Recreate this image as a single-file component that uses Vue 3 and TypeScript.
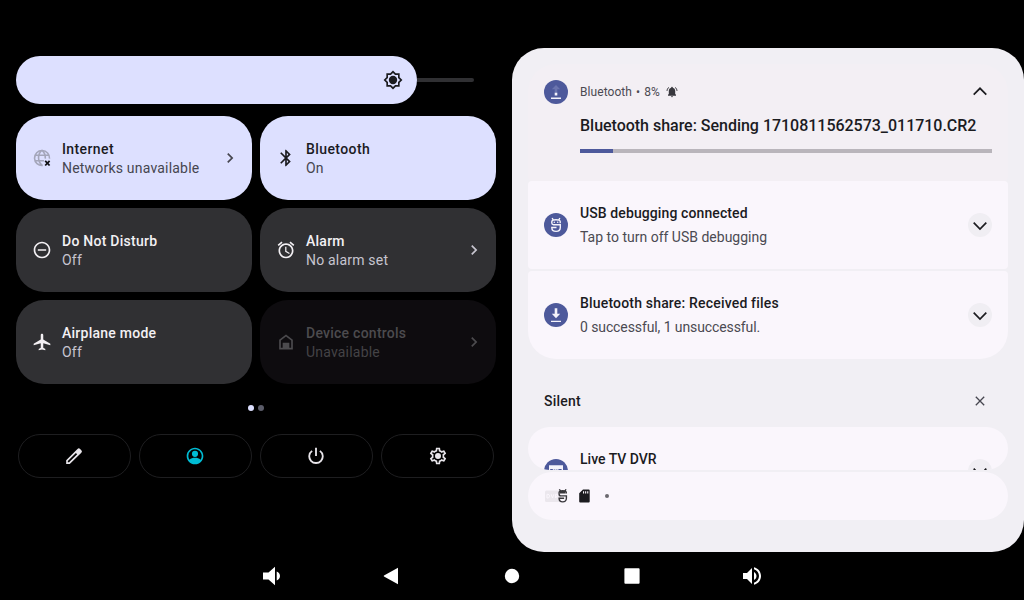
<script setup lang="ts">
interface Tile {
  title: string
  status: string
  icon: string
  state: 'on' | 'off' | 'disabled'
  chevron: boolean
}

interface Notice {
  title: string
  text: string
  icon: string
}

const paths: Record<string, string> = {
  bluetooth:
    'M17.71 7.71L12 2h-1v7.59L6.41 5 5 6.41 10.59 12 5 17.59 6.41 19 11 14.41V22h1l5.71-5.71-4.3-4.29 4.3-4.29zM13 5.83l1.88 1.88L13 9.59V5.83zm1.88 10.46L13 18.17v-3.76l1.88 1.88z',
  dnd: 'M7 11v2h10v-2H7zm5-9C6.48 2 2 6.48 2 12s4.48 10 10 10 10-4.48 10-10S17.52 2 12 2zm0 18c-4.41 0-8-3.59-8-8s3.59-8 8-8 8 3.59 8 8-3.59 8-8 8z',
  alarm:
    'M22 5.72l-4.6-3.86-1.29 1.53 4.6 3.86L22 5.72zM7.88 3.39L6.6 1.86 2 5.71l1.29 1.53 4.59-3.85zM12.5 8H11v6l4.75 2.85.75-1.23-4-2.37V8zM12 4c-4.97 0-9 4.03-9 9s4.02 9 9 9c4.97 0 9-4.03 9-9s-4.03-9-9-9zm0 16c-3.87 0-7-3.13-7-7s3.13-7 7-7 7 3.13 7 7-3.13 7-7 7z',
  airplane:
    'M22 16v-2l-8.5-5V3.5c0-.83-.67-1.5-1.5-1.5s-1.5.67-1.5 1.5V9L2 14v2l8.5-2.5V19L8 20.5V22l4-1 4 1v-1.5L13.5 19v-5.5L22 16z',
  home: 'M12 3L3.8 9.2V21h16.4V9.2L12 3zm6.2 16H16v-6H8v6H5.8v-8.8L12 5.5l6.2 4.7V19z',
  chevron: 'M10 6L8.59 7.41 13.17 12l-4.58 4.59L10 18l6-6z',
  pencil:
    'M20.8 5.100l-1.500-1.500a2.200 2.200 0 0 0-3.100 0L2.600 17.200V21.500h4.300L20.800 8.200a2.200 2.200 0 0 0 0-3.100zM6.100 19.500H4.600V18L14.300 8.400l1.500 1.500z',
  user: 'M12 2C6.480 2 2 6.480 2 12s4.480 10 10 10 10-4.480 10-10S17.520 2 12 2zM4 12a8 8 0 1 1 14.600 4.500C17 14.900 14.500 14.200 12 14.200s-5 .7-6.600 2.300A7.900 7.900 0 0 1 4 12zM12 5.700a3.700 3.700 0 1 0 0 7.400 3.700 3.700 0 0 0 0-7.400z',
  power:
    'M13.100 2h-2.200v10h2.200V2zm4.300 3.100l-1.400 1.500A7 7 0 1 1 8 6.600L6.600 5.100a9.200 9.200 0 1 0 10.800 0z',
  gear: 'M19.430 12.980c.04-.32.07-.64.07-.98 0-.34-.03-.66-.07-.98l2.110-1.650c.19-.15.24-.42.12-.64l-2-3.460c-.09-.16-.26-.25-.44-.25-.06 0-.12.01-.17.03l-2.490 1c-.52-.4-1.080-.73-1.690-.98l-.38-2.650C14.460 2.180 14.250 2 14 2h-4c-.25 0-.46.18-.49.42l-.38 2.650c-.61.25-1.170.59-1.690.98l-2.490-1c-.06-.02-.12-.03-.18-.03-.17 0-.34.09-.43.25l-2 3.460c-.13.22-.07.49.12.64l2.110 1.650c-.04.32-.07.65-.07.98 0 .33.03.66.07.98l-2.110 1.650c-.19.15-.24.42-.12.64l2 3.460c.09.16.26.25.44.25.06 0 .12-.01.17-.03l2.490-1c.52.4 1.080.73 1.690.98l.38 2.650c.03.24.24.42.49.42h4c.25 0 .46-.18.49-.42l.38-2.650c.61-.25 1.170-.59 1.690-.98l2.490 1c.06.02.12.03.18.03.17 0 .34-.09.43-.25l2-3.460c.12-.22.07-.49-.12-.64l-2.110-1.650zm-1.980-1.710c.04.31.05.52.05.73 0 .21-.02.43-.05.73l-.14 1.130.89.7 1.080.84-.7 1.210-1.270-.51-1.040-.42-.9.68c-.43.32-.84.56-1.250.73l-1.060.43-.16 1.130-.2 1.350h-1.400l-.19-1.350-.16-1.130-1.060-.43c-.43-.18-.83-.41-1.230-.71l-.91-.7-1.060.43-1.270.51-.7-1.210 1.080-.84.89-.7-.14-1.130c-.03-.31-.05-.54-.05-.74s.02-.43.05-.73l.14-1.130-.89-.7-1.080-.84.7-1.210 1.270.51 1.040.42.9-.68c.43-.32.84-.56 1.250-.73l1.060-.43.16-1.130.2-1.350h1.390l.19 1.350.16 1.130 1.060.43c.43.18.83.41 1.230.71l.91.7 1.060-.43 1.270-.51.7 1.210-1.070.85-.89.7.14 1.130zM12 8.400a3.600 3.600 0 1 0 0 7.200 3.600 3.600 0 0 0 0-7.200z',
  volDown: 'M3 8.500v7h5.500L15 21.300V2.700L8.500 8.500H3zM16.700 7.600v8.800c2-.6 3.300-2.300 3.300-4.400s-1.300-3.800-3.300-4.400z',
  back: 'M18 3.800v16.400L4 12.600a.8.800 0 0 1 0-1.200z',
  circle: 'M12 4.800a7.200 7.200 0 1 0 0 14.400 7.200 7.200 0 0 0 0-14.400z',
  square: 'M5.300 4.300h13.400a.9.900 0 0 1 .9.900v13.600a.9.900 0 0 1-.9.900H5.300a.9.900 0 0 1-.9-.9V5.200a.9.900 0 0 1 .9-.9z',
  volUp:
    'M3 9v6h4l5 5V4L7 9H3zm13.500 3c0-1.770-1.020-3.290-2.500-4.030v8.050c1.480-.73 2.500-2.250 2.500-4.020zM14 3.230v2.060c2.890.86 5 3.540 5 6.710s-2.110 5.850-5 6.710v2.060c4.010-.91 7-4.490 7-8.770s-2.990-7.860-7-8.770z',
}

const tiles: Tile[] = [
  { title: 'Internet', status: 'Networks unavailable', icon: 'globe', state: 'on', chevron: true },
  { title: 'Bluetooth', status: 'On', icon: 'bluetooth', state: 'on', chevron: false },
  { title: 'Do Not Disturb', status: 'Off', icon: 'dnd', state: 'off', chevron: false },
  { title: 'Alarm', status: 'No alarm set', icon: 'alarm', state: 'off', chevron: true },
  { title: 'Airplane mode', status: 'Off', icon: 'airplane', state: 'off', chevron: false },
  { title: 'Device controls', status: 'Unavailable', icon: 'home', state: 'disabled', chevron: true },
]

const actions = ['pencil', 'user', 'power', 'gear']
const navKeys = ['volDown', 'back', 'circle', 'square', 'volUp']

const notices: Notice[] = [
  { title: 'USB debugging connected', text: 'Tap to turn off USB debugging', icon: 'debug' },
  { title: 'Bluetooth share: Received files', text: '0 successful, 1 unsuccessful.', icon: 'download' },
]

const progress = 8
</script>

<template>
  <div class="screen">
    <main class="shade">
      <section class="quick">
        <div class="brightness">
          <div class="level">
            <svg class="ic20" viewBox="0 0 24 24">
              <path fill-rule="evenodd" d="M20 8.690V4h-4.690L12 .69 8.690 4H4v4.690L.69 12 4 15.310V20h4.690L12 23.310 15.310 20H20v-4.690L23.310 12 20 8.690zm-2 5.790V18h-3.520L12 20.480 9.520 18H6v-3.520L3.520 12 6 9.520V6h3.520L12 3.520 14.480 6H18v3.520L20.480 12 18 14.480z" />
              <circle cx="12" cy="12" r="5" />
            </svg>
          </div>
          <div class="rail"></div>
        </div>

        <div class="tiles">
          <div v-for="t in tiles" :key="t.title" class="tile" :class="t.state">
            <svg v-if="t.icon === 'globe'" class="ic20" viewBox="0 0 20 20">
              <g class="globe">
                <path d="M10.600 17.500A7.500 7.500 0 1 1 17.500 10.600M2.700 7.300h14.600M2.700 12.700h9.300M10.600 17.600C5.300 14 5.300 6 10 2.400C12.600 4.600 13.500 7.300 13.300 10.600" />
              </g>
              <path class="cross" d="M13.200 12.900l4.400 4.600M17.600 12.900l-4.400 4.600" />
            </svg>
            <svg v-else class="ic20" viewBox="0 0 24 24"><path :d="paths[t.icon]" /></svg>
            <div class="label">
              <div class="name">{{ t.title }}</div>
              <div class="status">{{ t.status }}</div>
            </div>
            <svg v-if="t.chevron" class="ic20 more" viewBox="0 0 24 24"><path :d="paths.chevron" /></svg>
          </div>
        </div>

        <div class="dots"><i class="current"></i><i></i></div>

        <div class="actions">
          <div v-for="a in actions" :key="a" class="action" :class="a">
            <svg class="ic20" viewBox="0 0 24 24"><path fill-rule="evenodd" :d="paths[a]" /></svg>
          </div>
        </div>
      </section>

      <section class="panel">
        <article class="sending">
          <span class="badge">
            <svg viewBox="0 0 24 24">
              <path class="faded" d="M12 5l-4.200 4.200h2.900V13h2.600V9.200h2.900z" />
              <path class="glyph" d="M10.700 12.800h2.600v2.600h-2.600zM7 17.600h10v1.500H7z" />
            </svg>
          </span>
          <div class="body">
            <div class="meta">
              <span>Bluetooth</span><span class="sep">•</span><span>{{ progress }}%</span>
              <svg class="bell" viewBox="0 0 12 12">
                <path d="M2 9.700V8.800L2.800 8V4.900C2.800 3.300 3.800 2.200 5.200 1.800V1.500a.8.800 0 0 1 1.600 0V1.800C8.200 2.200 9.200 3.300 9.200 4.900V8L10 8.800V9.700zM5 10.300h2a1 1 0 0 1-2 0z" />
                <path class="ring" d="M1 4.900C1.100 3.400 1.800 2.200 2.900 1.300M11 4.900C10.900 3.400 10.200 2.200 9.100 1.300" />
              </svg>
            </div>
            <h2>Bluetooth share: Sending 1710811562573_011710.CR2</h2>
            <div class="bar"><div :style="{ width: progress + '%' }"></div></div>
          </div>
          <svg class="collapse" viewBox="0 0 24 24"><path d="M5.700 14.700L12 8.300l6.300 6.400" /></svg>
        </article>

        <div class="group">
          <article v-for="n in notices" :key="n.title" class="notice">
            <span class="badge">
              <svg v-if="n.icon === 'debug'" viewBox="0 0 24 24">
                <path class="line" d="M16.200 10.200V8.600C16.200 7.200 14.800 6.800 12 6.800s-4.200.6-4.200 2V10c0 1.100.7 1.700 1.800 1.700h6.700v2.900c0 2.400-1.800 3.800-4.200 3.800s-4.300-1.500-4.300-3.900h4.700M8.200 4.900l.8 1.900M15.800 4.900l-.8 1.900" />
                <circle class="glyph" cx="10.300" cy="9.200" r=".8" /><circle class="glyph" cx="13.700" cy="9.200" r=".8" />
              </svg>
              <svg v-else viewBox="0 0 24 24">
                <path class="glyph" d="M10.700 5.200h2.600v5.600h2.900L12 15.200l-4.200-4.400h2.900zM7 17.700h10v1.400H7z" />
              </svg>
            </span>
            <div class="copy" :class="n.icon">
              <h3>{{ n.title }}</h3>
              <p>{{ n.text }}</p>
            </div>
            <span class="expand"><svg viewBox="0 0 24 24"><path d="M5.700 9.700L12 16l6.300-6.300" /></svg></span>
          </article>
        </div>

        <div class="silent">
          <span>Silent</span>
          <svg viewBox="0 0 24 24"><path d="M7.800 7.800l8.400 8.400M16.200 7.800l-8.400 8.400" /></svg>
        </div>

        <article class="live">
          <span class="badge">
            <svg viewBox="0 0 24 24">
              <path class="glyph" d="M5 6.200h14v11.500H5z" />
              <path class="mark" d="M6.800 13.500V10.500h1.200q1 0 1 1.500t-1 1.500zM10.500 10.500l1.300 3 1.300-3M15 13.500V10.500h2v1.500h-2" />
            </svg>
          </span>
          <h3>Live TV DVR</h3>
          <span class="expand"><svg viewBox="0 0 24 24"><path d="M5.700 9.700L12 16l6.300-6.300" /></svg></span>
        </article>

        <div class="shelf">
          <svg class="stack" viewBox="0 0 23 16">
            <rect class="ghost" x="0" y="2.500" width="16" height="11.500" rx="1.500" />
            <path class="ghost-mark" d="M2 10V6.300h1q1.500 0 1.500 1.800T3 10zM6.200 6.300L7.500 10l1.300-3.700M10.500 10V6.300h2v2h-2l2 1.700" />
            <path class="bug" d="M21.300 5.500V4.500C21.300 3 20 2.600 17.700 2.600s-3.600.5-3.600 1.900V6c0 1.300.8 1.900 1.800 1.900h5.500v2.400c0 2.400-1.600 3.600-3.700 3.600s-3.600-1.200-3.600-3.600h5M14.400 1.200l.8 1.600M21 1.200l-.8 1.600" />
            <path class="bug-face" d="M15 3h5.500v2.500H15z" />
          </svg>
          <svg class="card" viewBox="0 0 11 14">
            <path fill-rule="evenodd" d="M4 .5h5.700a1 1 0 0 1 1 1v11a1 1 0 0 1-1 1H1.200a1 1 0 0 1-1-1V4.300zM4 2.200v2.200h1.100V2.200zm2.100 0v2.200h1.100V2.200zm2.100 0v2.200h1.100V2.200z" />
          </svg>
          <i></i>
        </div>
      </section>
    </main>

    <nav class="nav">
      <svg v-for="k in navKeys" :key="k" viewBox="0 0 24 24"><path :d="paths[k]" /></svg>
    </nav>
  </div>
</template>

<style>
body {
  margin: 0;
  background: #000;
}
</style>

<style scoped>
.screen {
  width: 1024px;
  height: 600px;
  display: flex;
  flex-direction: column;
  overflow: hidden;
  background: #000;
  font-family: Roboto, "Liberation Sans", sans-serif;
  font-size: 14px;
  line-height: 19px;
}
svg {
  display: block;
  flex: none;
}
h2,
h3,
p {
  margin: 0;
  font-size: 14px;
  font-weight: 500;
}
.ic20 {
  width: 20px;
  height: 20px;
  fill: currentColor;
}
.shade {
  height: 552px;
  display: flex;
}

/* Quick settings */
.quick {
  width: 480px;
  padding: 56px 16px 0;
}
.brightness {
  display: flex;
  align-items: center;
  height: 48px;
}
.level {
  box-sizing: border-box;
  width: 401px;
  height: 48px;
  padding-right: 14px;
  border-radius: 24px;
  background: #dde0ff;
  color: #1b1b1f;
  display: flex;
  align-items: center;
  justify-content: flex-end;
}
.rail {
  width: 57px;
  height: 4px;
  border-radius: 0 2px 2px 0;
  background: #303033;
}
.tiles {
  display: grid;
  grid-template-columns: 236px 236px;
  grid-auto-rows: 84px;
  gap: 8px;
  margin-top: 12px;
}
.tile {
  box-sizing: border-box;
  display: flex;
  align-items: center;
  padding: 0 12px 0 16px;
  border-radius: 28px;
}
.tile.on {
  background: #dde0ff;
  color: #1b1b1f;
}
.tile.off {
  background: #303033;
  color: #f3f0f4;
}
.tile.disabled {
  background: #0e0c0f;
  color: #4c4b4e;
}
.label {
  flex: 1;
  margin-left: 10px;
  padding-top: 2px;
  white-space: nowrap;
}
.name {
  font-weight: 500;
  letter-spacing: 0.25px;
}
.on .name {
  letter-spacing: 0.4px;
}
.status {
  letter-spacing: 0.2px;
}
.on .status,
.on .more {
  color: #46464f;
}
.off .status,
.off .more {
  color: #c7c5d0;
}
.disabled .status {
  color: #444346;
}
.globe path {
  fill: none;
  stroke: #a4a6ba;
  stroke-width: 1.6;
}
.cross {
  fill: none;
  stroke: #111115;
  stroke-width: 1.8;
}
.dots {
  display: flex;
  justify-content: center;
  gap: 4px;
  margin: 21px 0 0 0.6px;
}
.dots i {
  width: 6px;
  height: 6px;
  border-radius: 50%;
  background: #5b5c69;
}
.dots .current {
  background: #dde0ff;
}
.actions {
  display: flex;
  gap: 8px;
  margin: 23px 2px 0;
}
.action {
  box-sizing: border-box;
  width: 113px;
  height: 44px;
  padding-right: 1px;
  border: 1px solid #1e1e20;
  border-radius: 22px;
  display: flex;
  align-items: center;
  justify-content: center;
  color: #e8e5ea;
}
.action.gear {
  padding-right: 0;
}
.action.user {
  color: #00bcd4;
}

/* Notifications */
.panel {
  box-sizing: border-box;
  width: 512px;
  height: 504px;
  margin-top: 48px;
  padding: 16px;
  border-radius: 32px;
  background: #f1eff4;
  color: #1b1b1f;
}
.badge {
  flex: none;
  width: 24px;
  height: 24px;
  border-radius: 50%;
  background: #4d599b;
}
.glyph {
  fill: #f4f3fb;
}
.faded {
  fill: #6a74ae;
}
.line {
  fill: none;
  stroke: #f4f3fb;
  stroke-width: 1.4;
}
.mark {
  fill: none;
  stroke: #4d599b;
  stroke-width: 1.2;
}
.sending {
  box-sizing: border-box;
  height: 117px;
  padding: 16px;
  display: flex;
  align-items: flex-start;
  position: relative;
  background: #f3eff4;
  border-radius: 28px 28px 4px 4px;
}
.body {
  margin-left: 12px;
  width: 412px;
}
.meta {
  display: flex;
  align-items: center;
  height: 24px;
  font-size: 12px;
  color: #4b4a52;
  letter-spacing: 0.07px;
}
.sep {
  margin: 0 4px;
}
.bell {
  width: 12px;
  height: 12px;
  margin-left: 6px;
  fill: #38373d;
}
.ring {
  fill: none;
  stroke: #38373d;
  stroke-width: 1;
}
.sending h2 {
  margin-top: 12px;
  font-size: 16px;
  line-height: 20px;
  letter-spacing: -0.02px;
  white-space: nowrap;
}
.bar {
  height: 4px;
  margin-top: 13px;
  background: #b9b5bb;
}
.bar div {
  height: 4px;
  background: #4d599b;
}
.collapse {
  position: absolute;
  right: 16px;
  top: 16px;
}
.collapse,
.expand {
  width: 24px;
  height: 24px;
}
.expand {
  margin-left: auto;
  border-radius: 50%;
  background: #f0eef3;
}
.collapse path,
.expand path {
  fill: none;
  stroke: #1b1b1f;
  stroke-width: 1.7;
}
.notice {
  box-sizing: border-box;
  display: flex;
  align-items: center;
  height: 88px;
  padding: 0 16px;
  border-radius: 4px;
  background: #faf6fc;
}
.notice + .notice {
  margin-top: 2px;
  border-radius: 4px 4px 28px 28px;
}
.copy {
  margin-left: 12px;
}
.copy h3,
.copy p {
  line-height: 24px;
}
.copy h3 {
  letter-spacing: 0.1px;
}
.copy p {
  font-weight: 400;
  color: #4b4a52;
}
.download h3 {
  letter-spacing: 0.18px;
}
.download p {
  letter-spacing: -0.1px;
}
.silent {
  display: flex;
  align-items: center;
  justify-content: space-between;
  height: 68px;
  padding: 16px 16px 0;
  box-sizing: border-box;
  font-weight: 500;
  letter-spacing: 0.2px;
}
.silent svg {
  width: 24px;
  height: 24px;
  fill: none;
  stroke: #46464f;
  stroke-width: 1.3;
}
.live {
  box-sizing: border-box;
  height: 43px;
  display: flex;
  align-items: flex-start;
  padding: 32px 16px 0;
  overflow: hidden;
  border-radius: 22px;
  background: #faf6fc;
}
.live h3 {
  margin: -9px 0 0 12px;
}
.shelf {
  box-sizing: border-box;
  height: 48px;
  margin-top: 2px;
  padding: 0 16px;
  display: flex;
  align-items: center;
  border-radius: 24px;
  background: #faf6fc;
}
.stack {
  width: 23px;
  height: 16px;
  margin-left: 1px;
}
.ghost {
  fill: #ebe7ed;
}
.ghost-mark {
  fill: none;
  stroke: #faf6fc;
}
.bug {
  fill: none;
  stroke: #38373b;
  stroke-width: 1.4;
}
.bug-face {
  fill: #38373b;
}
.card {
  width: 11px;
  height: 14px;
  margin-left: 11px;
  fill: #1b1b1f;
}
.shelf i {
  width: 4px;
  height: 4px;
  margin-left: 14.500px;
  border-radius: 50%;
  background: #6a686e;
}

/* Navigation bar */
.nav {
  height: 48px;
  display: flex;
  align-items: center;
  justify-content: center;
  gap: 96px;
}
.nav svg {
  width: 24px;
  height: 24px;
  fill: #fff;
}
</style>
